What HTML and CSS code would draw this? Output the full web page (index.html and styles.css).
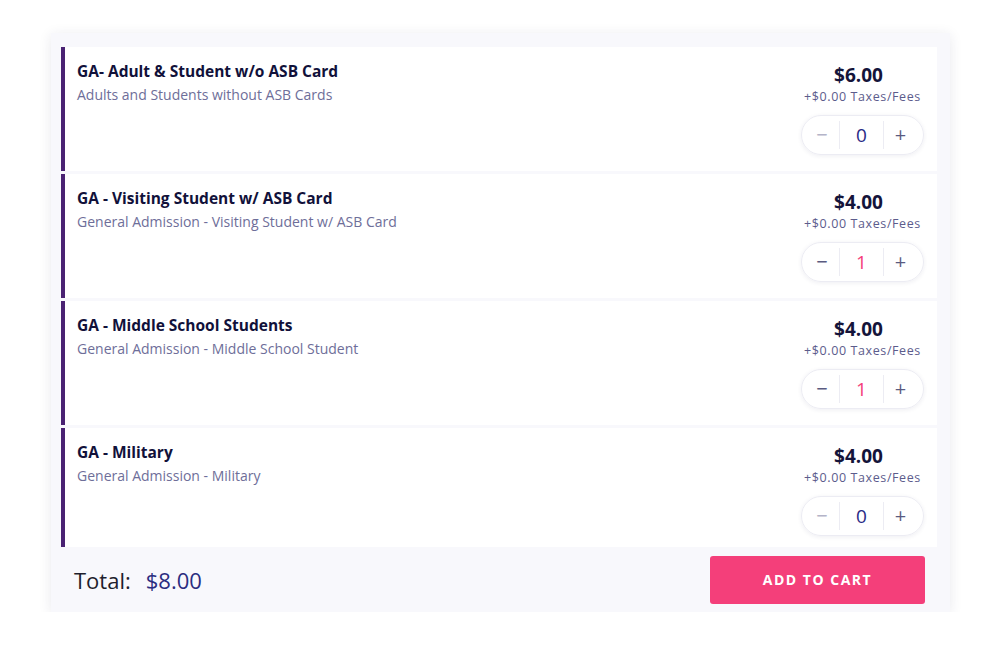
FILE: index.html
```html
<!DOCTYPE html>
<html>
<head>
<meta charset="utf-8">
<link rel="stylesheet" href="styles.css">
</head>
<body>
<div class="card">
  <div class="list">
    <div class="row">
      <div class="info">
        <div class="title">GA- Adult &amp; Student w/o ASB Card</div>
        <div class="desc">Adults and Students without ASB Cards</div>
      </div>
      <div class="side">
        <div class="price">$6.00</div>
        <div class="fees">+$0.00 Taxes/Fees</div>
        <div class="stepper">
          <span class="btn minus off">&minus;</span>
          <span class="qty">0</span>
          <span class="btn plus">+</span>
        </div>
      </div>
    </div>
    <div class="row">
      <div class="info">
        <div class="title">GA - Visiting Student w/ ASB Card</div>
        <div class="desc">General Admission - Visiting Student w/ ASB Card</div>
      </div>
      <div class="side">
        <div class="price">$4.00</div>
        <div class="fees">+$0.00 Taxes/Fees</div>
        <div class="stepper">
          <span class="btn minus">&minus;</span>
          <span class="qty on">1</span>
          <span class="btn plus">+</span>
        </div>
      </div>
    </div>
    <div class="row">
      <div class="info">
        <div class="title">GA - Middle School Students</div>
        <div class="desc">General Admission - Middle School Student</div>
      </div>
      <div class="side">
        <div class="price">$4.00</div>
        <div class="fees">+$0.00 Taxes/Fees</div>
        <div class="stepper">
          <span class="btn minus">&minus;</span>
          <span class="qty on">1</span>
          <span class="btn plus">+</span>
        </div>
      </div>
    </div>
    <div class="row">
      <div class="info">
        <div class="title">GA - Military</div>
        <div class="desc">General Admission - Military</div>
      </div>
      <div class="side">
        <div class="price">$4.00</div>
        <div class="fees">+$0.00 Taxes/Fees</div>
        <div class="stepper">
          <span class="btn minus off">&minus;</span>
          <span class="qty">0</span>
          <span class="btn plus">+</span>
        </div>
      </div>
    </div>
  </div>
  <div class="footer">
    <div class="total"><span class="label">Total:</span><span class="amount">$8.00</span></div>
    <div class="cart">ADD TO CART</div>
  </div>
</div>
</body>
</html>
```
FILE: styles.css
```css
html, body {
  margin: 0;
  padding: 0;
  background: #ffffff;
  font-family: "Open Sans", "Liberation Sans", sans-serif;
}
body {
  padding: 33px 50px 0 51px;
}
.card {
  background: #f8f8fc;
  box-shadow: 0 2px 12px rgba(40, 40, 80, 0.10);
  padding: 14px 13px 0 10px;
}
.list {
  height: 500px;
  overflow: hidden;
  display: flex;
  flex-direction: column;
  gap: 3px;
}
.row {
  flex: 0 0 124px;
  height: 124px;
  box-sizing: border-box;
  background: #ffffff;
  border-left: 4px solid #4a2273;
  display: flex;
  justify-content: space-between;
  padding: 13px 13px 0 12px;
}
.title {
  font-size: 15.5px;
  font-weight: 700;
  color: #11113a;
  line-height: 22px;
}
.desc {
  font-size: 14px;
  color: #6e6e99;
  line-height: 20px;
  margin-top: 3px;
}
.side {
  display: flex;
  flex-direction: column;
  align-items: center;
  width: 123px;
}
.price {
  font-size: 19px;
  font-weight: 700;
  color: #14143a;
  line-height: 26px;
  margin-top: 2px;
  margin-right: 8px;
}
.fees {
  font-size: 12.5px;
  color: #5c5c8c;
  letter-spacing: 0.6px;
  line-height: 18px;
  white-space: nowrap;
}
.stepper {
  margin-top: 9px;
  width: 123px;
  height: 40px;
  box-sizing: border-box;
  border: 1px solid #ececf3;
  border-radius: 20px;
  box-shadow: 0 1px 4px rgba(40, 40, 90, 0.08);
  display: flex;
  align-items: center;
}
.btn {
  font-size: 20px;
  color: #5a5a80;
  text-align: center;
  line-height: 28px;
}
.minus {
  width: 38px;
  padding-left: 3px;
  box-sizing: border-box;
  border-right: 1px solid #ececf3;
}
.off {
  color: #b4b4c8;
}
.plus {
  width: 40px;
  padding-right: 6px;
  box-sizing: border-box;
  border-left: 1px solid #ececf3;
}
.qty {
  flex: 1;
  text-align: center;
  font-size: 19px;
  color: #2a2a86;
}
.qty.on {
  color: #f43f7a;
}
.footer {
  height: 65px;
  display: flex;
  align-items: center;
  justify-content: space-between;
  padding: 0 12px 0 13px;
}
.total {
  font-size: 22px;
  display: flex;
  gap: 15px;
  margin-top: 1px;
}
.label {
  color: #1e1e2c;
}
.amount {
  color: #2b2d80;
}
.cart {
  width: 215px;
  height: 48px;
  border-radius: 3px;
  background: #f43f7a;
  color: #ffffff;
  font-weight: 700;
  font-size: 14px;
  letter-spacing: 1.5px;
  display: flex;
  align-items: center;
  justify-content: center;
}
```
